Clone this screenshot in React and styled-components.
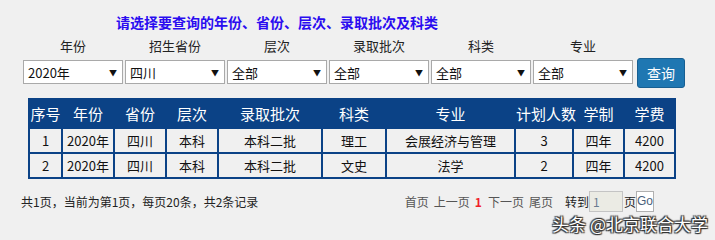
import React from 'react'
import styled, {createGlobalStyle} from 'styled-components'

const GlobalStyle = createGlobalStyle`
    body {
        margin: 0;
        background: #f0f0f0;
        font-family: "Noto Sans CJK SC", "Noto Sans", sans-serif;
    }
`

const Page = styled.div`
    position: relative;
    width: 715px;
    height: 240px;
    overflow: hidden;
    background: #f0f0f0;
`

const Title = styled.h1`
    margin: 0;
    padding: 12px 0 0 116px;
    font-size: 14px;
    line-height: 20px;
    font-weight: bold;
    color: #2a0cf0;
`

const FilterRow = styled.div`
    display: flex;
    align-items: flex-end;
    gap: 2px;
    margin-top: 5px;
    padding-left: 23px;
`

const Field = styled.div`
    display: flex;
    flex-direction: column;
    width: 100px;
`

const Label = styled.div`
    text-align: center;
    font-size: 13px;
    line-height: 18px;
    color: #222;
    margin-bottom: 5px;
`

const SelectBox = styled.div`
    box-sizing: border-box;
    height: 24px;
    display: flex;
    align-items: center;
    justify-content: space-between;
    padding: 0 5px 0 4px;
    background: #fff;
    border: 1px solid #a9a9a9;
    font-size: 13px;
    color: #111;
`

const Arrow = styled.span`
    font-size: 8px;
    color: #111;
`

const QueryButton = styled.button`
    box-sizing: border-box;
    width: 48px;
    height: 30px;
    margin-left: 2px;
    margin-bottom: -4px;
    background: #1f77b2;
    border: 1px solid #175f92;
    border-radius: 3px;
    color: #fff;
    font-family: inherit;
    font-size: 14px;
    padding: 0;
`

const Table = styled.table`
    margin: 14px 0 0 28px;
    width: 646px;
    border-collapse: collapse;
    border: 2px solid #0b4286;
    table-layout: fixed;
`

const Th = styled.th`
    height: 27px;
    padding: 0;
    background: #0b4286;
    color: #fff;
    font-size: 15px;
    font-weight: normal;
    border: 2px solid #0b4286;
    white-space: nowrap;
`

const Td = styled.td`
    height: 23px;
    padding: 0;
    text-align: center;
    font-size: 13px;
    color: #111;
    border: 2px solid #0b4286;
`

const Footer = styled.div`
    display: flex;
    align-items: center;
    height: 22px;
    margin-top: 11px;
    padding-left: 21px;
    font-size: 12px;
`

const Summary = styled.span`
    color: #222;
`

const Pager = styled.div`
    display: flex;
    align-items: center;
    margin-left: auto;
    padding-right: 61px;
`

const PageLink = styled.span`
    margin-right: ${p => p.$gap || 5}px;
    color: ${p => (p.$current ? '#f0202a' : '#555')};
    font-weight: ${p => (p.$current ? 'bold' : 'normal')};
`

const Jump = styled.span`
    margin-left: ${p => p.$gap ?? 6}px;
    color: #222;
`

const PageInput = styled.div`
    box-sizing: border-box;
    width: 34px;
    height: 21px;
    padding-left: 3px;
    line-height: 19px;
    background: #ebebe4;
    border: 1px solid #c4c4c4;
    color: #6a7b90;
`

const GoButton = styled.div`
    box-sizing: border-box;
    width: 18px;
    height: 21px;
    line-height: 19px;
    text-align: center;
    background: #fff;
    border: 1px solid #b0b0b0;
    font-family: "Liberation Sans", sans-serif;
    color: #4a5f7c;
`

const Watermark = styled.div`
    position: absolute;
    right: 7px;
    bottom: 7px;
    font-size: 17px;
    line-height: 19px;
    color: #fff;
    text-shadow: 0 0 1px #222, 1px 1px 1px #333, -1px -1px 1px #333, 1px -1px 1px #333, -1px 1px 1px #333;
`

const filters = [
    {label: '年份', value: '2020年'},
    {label: '招生省份', value: '四川'},
    {label: '层次', value: '全部'},
    {label: '录取批次', value: '全部'},
    {label: '科类', value: '全部'},
    {label: '专业', value: '全部'},
]

const columns = [
    {name: '序号', width: 33},
    {name: '年份', width: 52},
    {name: '省份', width: 52},
    {name: '层次', width: 52},
    {name: '录取批次', width: 104},
    {name: '科类', width: 64},
    {name: '专业', width: 129},
    {name: '计划人数', width: 58},
    {name: '学制', width: 51},
    {name: '学费', width: 51},
]

const rows = [
    ['1', '2020年', '四川', '本科', '本科二批', '理工', '会展经济与管理', '3', '四年', '4200'],
    ['2', '2020年', '四川', '本科', '本科二批', '文史', '法学', '2', '四年', '4200'],
]

export default function App() {
    return (
        <Page>
            <GlobalStyle />
            <Title>请选择要查询的年份、省份、层次、录取批次及科类</Title>
            <FilterRow>
                {filters.map(f => (
                    <Field key={f.label}>
                        <Label>{f.label}</Label>
                        <SelectBox>
                            <span>{f.value}</span>
                            <Arrow>▼</Arrow>
                        </SelectBox>
                    </Field>
                ))}
                <QueryButton>查询</QueryButton>
            </FilterRow>
            <Table>
                <colgroup>
                    {columns.map(c => <col key={c.name} style={{width: c.width}} />)}
                </colgroup>
                <thead>
                    <tr>
                        {columns.map(c => <Th key={c.name}>{c.name}</Th>)}
                    </tr>
                </thead>
                <tbody>
                    {rows.map(r => (
                        <tr key={r[0]}>
                            {r.map((cell, i) => <Td key={i}>{cell}</Td>)}
                        </tr>
                    ))}
                </tbody>
            </Table>
            <Footer>
                <Summary>共1页，当前为第1页，每页20条，共2条记录</Summary>
                <Pager>
                    <PageLink>首页</PageLink>
                    <PageLink>上一页</PageLink>
                    <PageLink $current $gap={6}>1</PageLink>
                    <PageLink>下一页</PageLink>
                    <PageLink>尾页</PageLink>
                    <Jump $gap={7}>转到</Jump>
                    <PageInput>1</PageInput>
                    <Jump $gap={1}>页</Jump>
                    <GoButton>Go</GoButton>
                </Pager>
            </Footer>
            <Watermark>头条 @北京联合大学</Watermark>
        </Page>
    )
}
